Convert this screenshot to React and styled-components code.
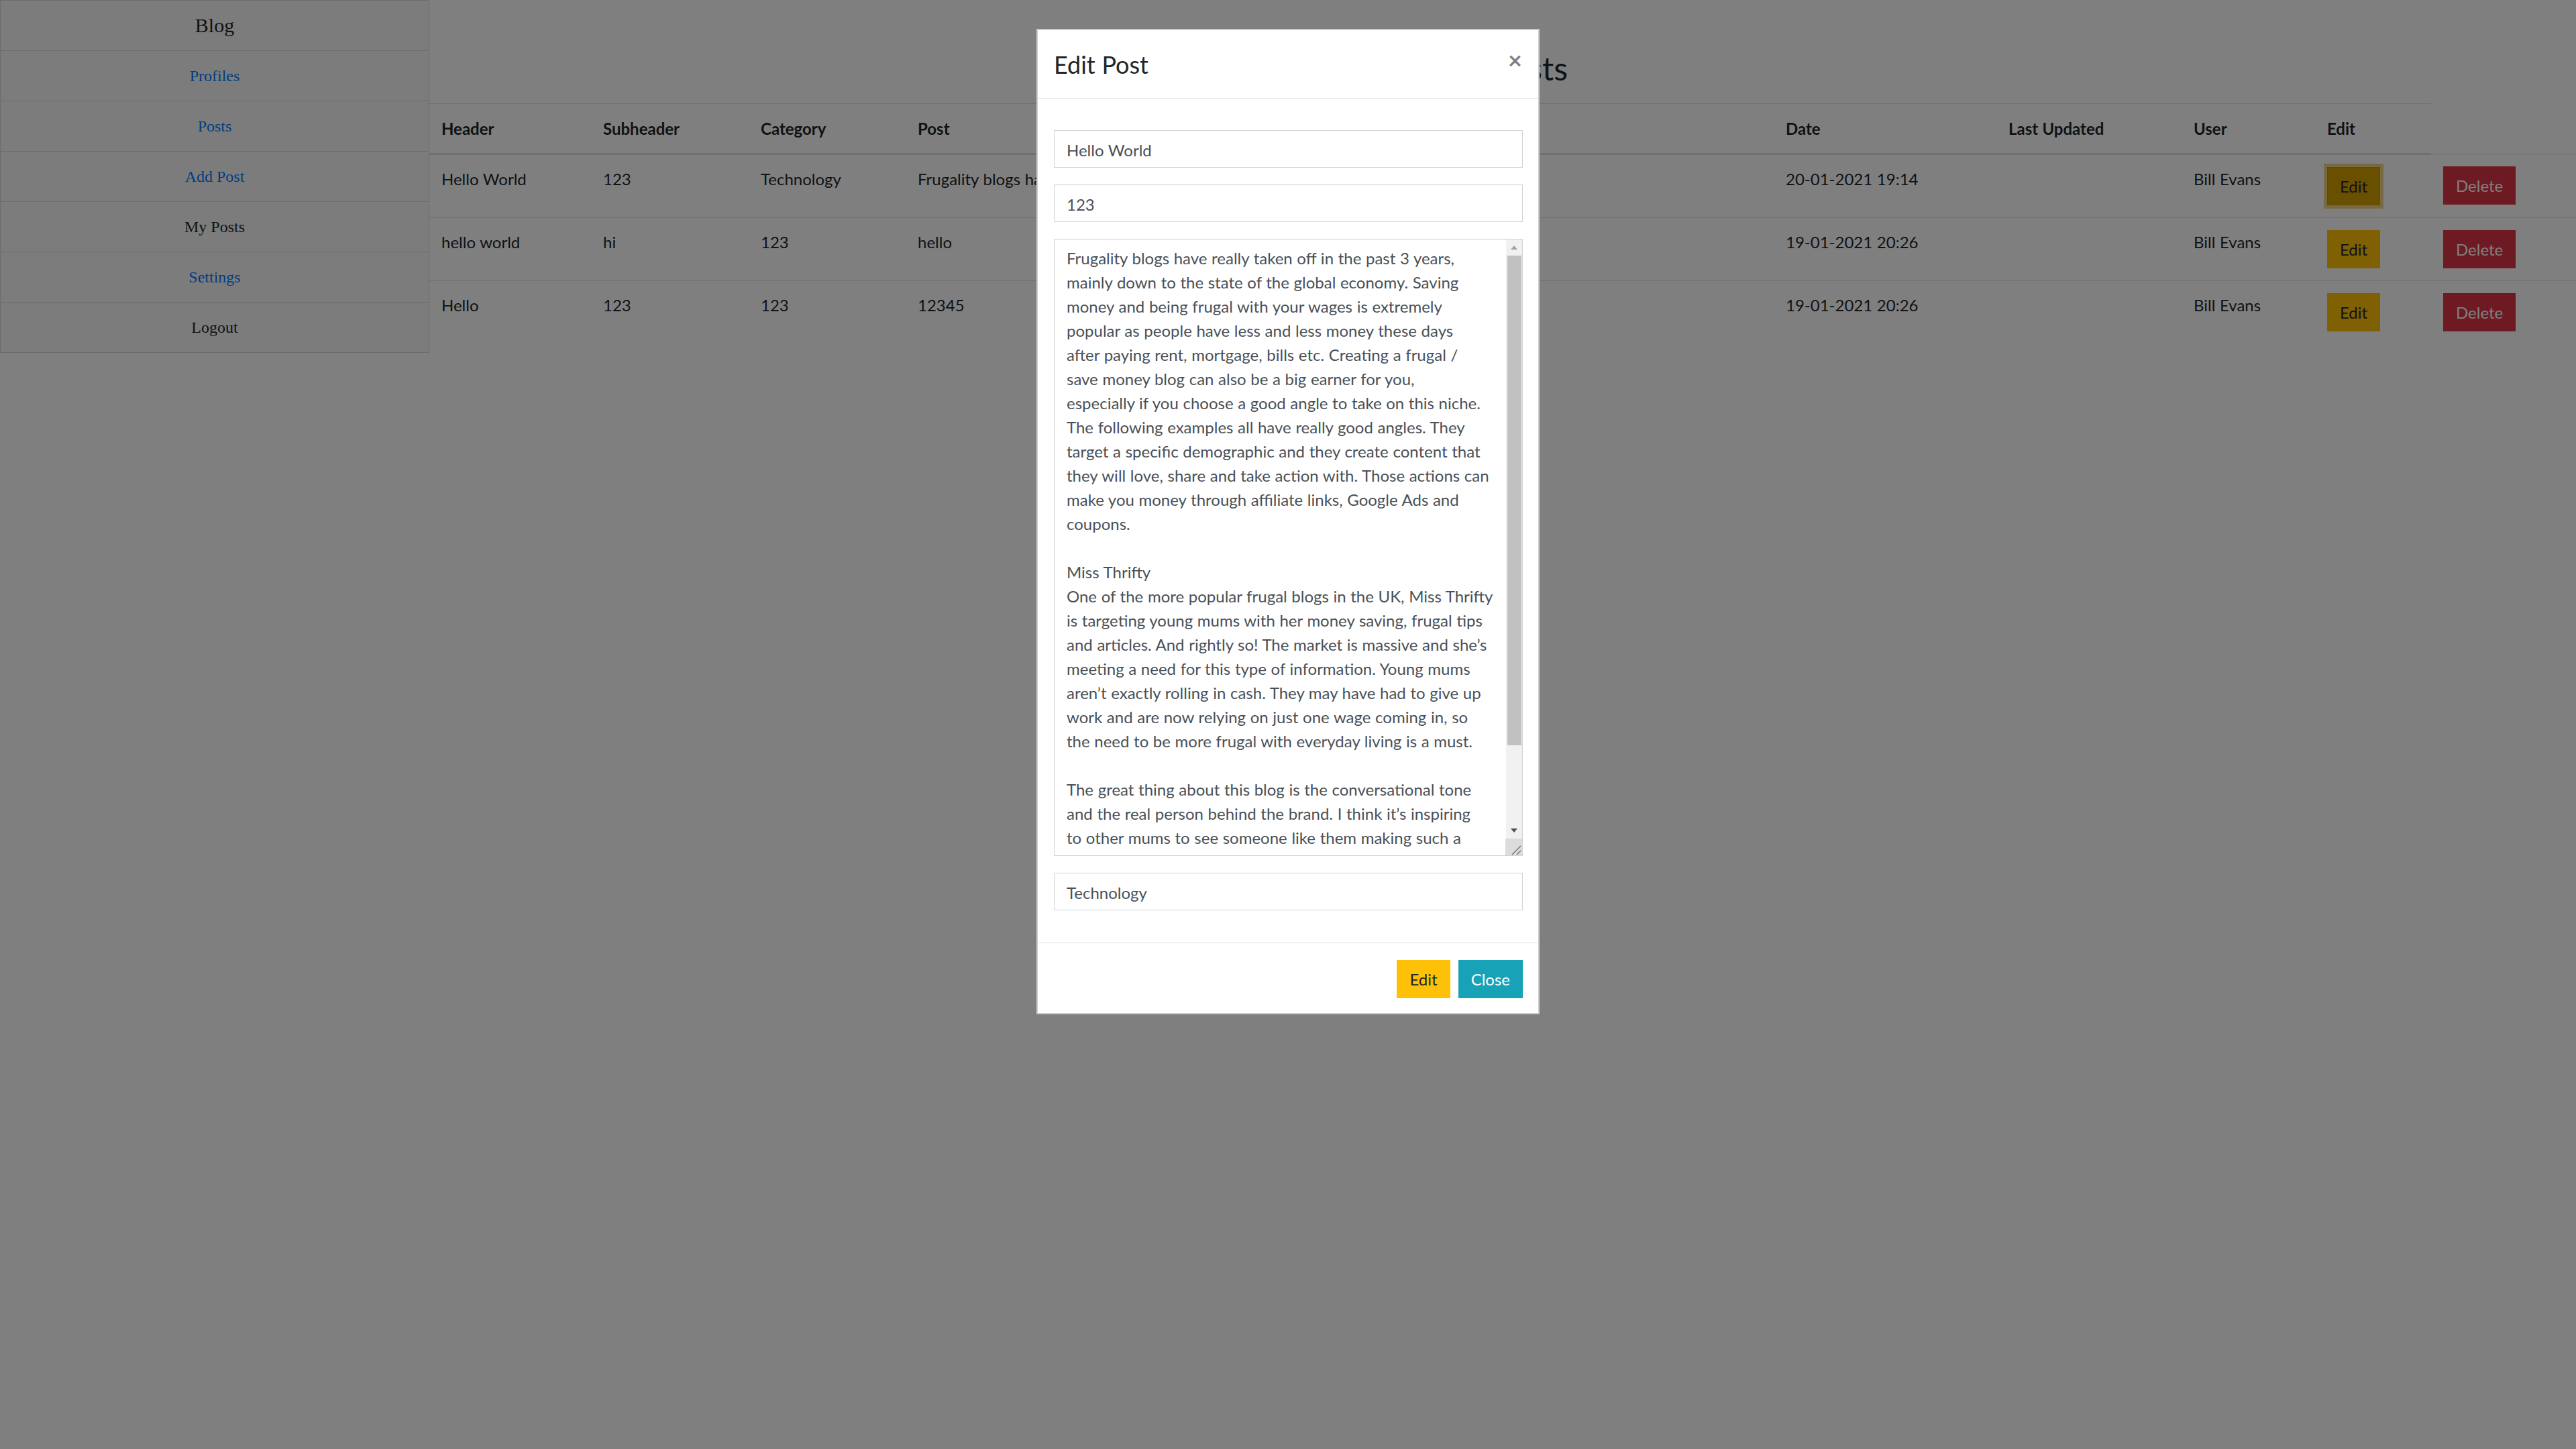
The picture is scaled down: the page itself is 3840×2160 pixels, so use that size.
import React from 'react';
import styled, { createGlobalStyle, css } from 'styled-components';

const FONT = `Lato, "Open Sans", "Noto Sans", sans-serif`;
const SERIF = `"Liberation Serif", "Times New Roman", serif`;

const GlobalStyle = createGlobalStyle`
  *, *::before, *::after { box-sizing: border-box; }
  html, body { margin: 0; padding: 0; background: #fff; }
  body {
    font-family: ${FONT};
    font-size: 24px;
    line-height: 36px;
    color: #212529;
    word-spacing: 0.02em;
  }
`;

const Page = styled.div`
  display: flex;
  align-items: flex-start;
  width: 100%;
  height: 100vh;
  overflow: hidden;
`;

const Sidebar = styled.nav`
  flex: 0 0 640px;
  display: flex;
  flex-direction: column;
`;

const NavItem = styled.a`
  display: block;
  height: 76px;
  line-height: 74px;
  margin-top: -1px;
  &:first-child { margin-top: 0; }
  border: 1px solid rgba(0, 0, 0, 0.125);
  background: #f8f9fa;
  text-align: center;
  font-family: ${SERIF};
  word-spacing: 0;
  font-size: ${({ $brand }) => ($brand ? '30px' : '24px')};
  color: ${({ $link }) => ($link ? '#007bff' : '#212529')};
  text-decoration: none;
`;

const Main = styled.main`
  flex: 1 1 auto;
  min-width: 0;
`;

const Title = styled.h2`
  margin: 0;
  padding: 73px 0 24px;
  font-size: 48px;
  line-height: 57px;
  font-weight: 400;
  text-align: center;
`;

const Table = styled.table`
  width: 100%;
  border-collapse: collapse;
  table-layout: fixed;
`;

const Th = styled.th`
  padding: 19px 18px 18px;
  text-align: left;
  vertical-align: bottom;
  font-weight: 700;
  border-top: 1px solid #dee2e6;
  border-bottom: 3px solid #dee2e6;
  white-space: nowrap;
`;

const Td = styled.td`
  padding: 18px;
  vertical-align: top;
  border-top: 1px solid #dee2e6;
  white-space: nowrap;
  overflow: hidden;
`;

const variants = {
  warning: css`
    background: #ffc107;
    border-color: #ffc107;
    color: #212529;
  `,
  warningActive: css`
    background: #d39e00;
    border-color: #c69500;
    color: #212529;
    box-shadow: 0 0 0 5px rgba(222, 170, 12, 0.5);
  `,
  danger: css`
    background: #dc3545;
    border-color: #dc3545;
    color: #fff;
  `,
  info: css`
    background: #17a2b8;
    border-color: #17a2b8;
    color: #fff;
  `,
};

const Btn = styled.button`
  font-family: ${FONT};
  font-size: 24px;
  line-height: 36px;
  word-spacing: 0.02em;
  padding: 10px 18px 9px;
  border: 1px solid transparent;
  border-radius: 0;
  cursor: pointer;
  ${({ $variant }) => variants[$variant]}
`;

const TableBtn = styled(Btn)`
  display: block;
`;

const Backdrop = styled.div`
  position: fixed;
  inset: 0;
  background: #000;
  opacity: 0.5;
`;

const ModalWrap = styled.div`
  position: fixed;
  inset: 0;
  overflow: hidden;
`;

const Dialog = styled.div`
  width: 750px;
  margin: 43px auto 0;
  background: #fff;
  border: 2px solid rgba(0, 0, 0, 0.2);
  display: flex;
  flex-direction: column;
`;

const ModalHeader = styled.div`
  display: flex;
  align-items: flex-start;
  justify-content: space-between;
  padding: 24px 24px 23px;
  border-bottom: 1px solid #dee2e6;
`;

const ModalTitle = styled.div`
  font-size: 36px;
  line-height: 54px;
  font-weight: 400;
  color: #212529;
`;

const CloseX = styled.button`
  background: none;
  border: 0;
  padding: 24px;
  margin: -22px -24px -24px auto;
  font-family: ${FONT};
  font-size: 36px;
  font-weight: 700;
  line-height: 1;
  color: #000;
  opacity: 0.5;
  text-shadow: 0 1px 0 #fff;
  cursor: pointer;
`;

const ModalBody = styled.form`
  display: flex;
  flex-direction: column;
  gap: 25px;
  padding: 47px 23px 48px 24px;
`;

const fieldBase = css`
  display: block;
  width: 100%;
  border: 1px solid #ced4da;
  border-radius: 0;
  background: #fff;
  font-family: ${FONT};
  font-size: 24px;
  line-height: 36px;
  word-spacing: 0.02em;
  color: #495057;
  padding: 10px 18px 8px;
  margin: 0;
`;

const Input = styled.input`
  ${fieldBase}
  height: 56px;
  &:focus { outline: none; }
`;

const FieldWrap = styled.div`
  position: relative;
`;

const TextArea = styled.textarea`
  ${fieldBase}
  height: 920px;
  padding-right: 44px;
  resize: none;
  overflow-y: scroll;
  overflow-x: hidden;
  white-space: pre;
  scrollbar-width: none;
  &::-webkit-scrollbar { display: none; }
  &:focus { outline: none; }
`;

/* Classic scrollbar drawn over the textarea's right edge */
const ScrollBar = styled.div`
  position: absolute;
  top: 1px;
  right: 1px;
  bottom: 1px;
  width: 24px;
  display: flex;
  flex-direction: column;
  background: #f1f1f1;
  pointer-events: none;
`;

const ArrowBtn = styled.div`
  flex: 0 0 24px;
  display: flex;
  align-items: center;
  justify-content: center;
  &::before {
    content: '';
    width: 0;
    height: 0;
    border-left: 5.5px solid transparent;
    border-right: 5.5px solid transparent;
    ${({ $dir, $color }) =>
      $dir === 'up'
        ? `border-bottom: 6px solid ${$color};`
        : `border-top: 6px solid ${$color};`}
  }
`;

const Track = styled.div`
  flex: 1 1 auto;
  padding: 0 1px 0 2px;
`;

const Thumb = styled.div`
  height: ${({ $h }) => $h}px;
  background: #c1c1c1;
`;

const Resizer = styled.div`
  flex: 0 0 25px;
  margin-left: -1px;
  background: #dcdcdc;
  display: flex;
  align-items: flex-end;
  justify-content: flex-end;
`;

const ModalFooter = styled.div`
  display: flex;
  justify-content: flex-end;
  align-items: center;
  gap: 12px;
  padding: 25px 23px 22px 24px;
  border-top: 1px solid #dee2e6;
`;

const postText = [
  'Frugality blogs have really taken off in the past 3 years,',
  'mainly down to the state of the global economy. Saving',
  'money and being frugal with your wages is extremely',
  'popular as people have less and less money these days',
  'after paying rent, mortgage, bills etc. Creating a frugal /',
  'save money blog can also be a big earner for you,',
  'especially if you choose a good angle to take on this niche.',
  'The following examples all have really good angles. They',
  'target a specific demographic and they create content that',
  'they will love, share and take action with. Those actions can',
  'make you money through affiliate links, Google Ads and',
  'coupons.',
  '',
  'Miss Thrifty',
  'One of the more popular frugal blogs in the UK, Miss Thrifty',
  'is targeting young mums with her money saving, frugal tips',
  'and articles. And rightly so! The market is massive and she’s',
  'meeting a need for this type of information. Young mums',
  'aren’t exactly rolling in cash. They may have had to give up',
  'work and are now relying on just one wage coming in, so',
  'the need to be more frugal with everyday living is a must.',
  '',
  'The great thing about this blog is the conversational tone',
  'and the real person behind the brand. I think it’s inspiring',
  'to other mums to see someone like them making such a',
  'success of it and earning money from home while looking',
  'after their little ones.',
  '',
  'Money Saving Mom',
].join('\n');

const navItems = [
  { label: 'Blog', brand: true },
  { label: 'Profiles', link: true },
  { label: 'Posts', link: true },
  { label: 'Add Post', link: true },
  { label: 'My Posts' },
  { label: 'Settings', link: true },
  { label: 'Logout' },
];

const colWidths = [241, 235, 234, 1294, 332, 276, 199, 173, 216];
const headers = ['Header', 'Subheader', 'Category', 'Post', 'Date', 'Last Updated', 'User', 'Edit'];

const rows = [
  {
    header: 'Hello World',
    sub: '123',
    cat: 'Technology',
    post: 'Frugality blogs have really taken off in the past 3 years,',
    date: '20-01-2021 19:14',
    user: 'Bill Evans',
    active: true,
  },
  { header: 'hello world', sub: 'hi', cat: '123', post: 'hello', date: '19-01-2021 20:26', user: 'Bill Evans' },
  { header: 'Hello', sub: '123', cat: '123', post: '12345', date: '19-01-2021 20:26', user: 'Bill Evans' },
];

export default function App() {
  return (
    <>
      <GlobalStyle />
      <Page>
        <Sidebar>
          {navItems.map((n) => (
            <NavItem key={n.label} href="#" $brand={n.brand} $link={n.link}>
              {n.label}
            </NavItem>
          ))}
        </Sidebar>
        <Main>
          <Title>My Posts</Title>
          <Table>
            <colgroup>
              {colWidths.map((w, i) => (
                <col key={i} style={{ width: w }} />
              ))}
            </colgroup>
            <thead>
              <tr>
                {headers.map((h) => (
                  <Th key={h}>{h}</Th>
                ))}
              </tr>
            </thead>
            <tbody>
              {rows.map((r, i) => (
                <tr key={i}>
                  <Td>{r.header}</Td>
                  <Td>{r.sub}</Td>
                  <Td>{r.cat}</Td>
                  <Td>{r.post}</Td>
                  <Td>{r.date}</Td>
                  <Td></Td>
                  <Td>{r.user}</Td>
                  <Td>
                    <TableBtn type="button" $variant={r.active ? 'warningActive' : 'warning'}>Edit</TableBtn>
                  </Td>
                  <Td>
                    <TableBtn type="button" $variant="danger">Delete</TableBtn>
                  </Td>
                </tr>
              ))}
            </tbody>
          </Table>
        </Main>
      </Page>
      <Backdrop />
      <ModalWrap>
        <Dialog role="dialog">
          <ModalHeader>
            <ModalTitle>Edit Post</ModalTitle>
            <CloseX type="button" aria-label="Close">×</CloseX>
          </ModalHeader>
          <ModalBody onSubmit={(e) => e.preventDefault()}>
            <Input defaultValue="Hello World" />
            <Input defaultValue="123" />
            <FieldWrap>
              <TextArea wrap="off" defaultValue={postText} />
              <ScrollBar aria-hidden="true">
                <ArrowBtn $dir="up" $color="#a3a3a3" />
                <Track>
                  <Thumb $h={730} />
                </Track>
                <ArrowBtn $dir="down" $color="#505050" />
                <Resizer>
                  <svg width="25" height="25" viewBox="0 0 25 25">
                    <line x1="10" y1="24" x2="23" y2="11" stroke="#6a6a6a" strokeWidth="1.2" />
                    <line x1="17" y1="24" x2="23" y2="18" stroke="#6a6a6a" strokeWidth="1.2" />
                  </svg>
                </Resizer>
              </ScrollBar>
            </FieldWrap>
            <Input defaultValue="Technology" />
          </ModalBody>
          <ModalFooter>
            <Btn type="button" $variant="warning">Edit</Btn>
            <Btn type="button" $variant="info">Close</Btn>
          </ModalFooter>
        </Dialog>
      </ModalWrap>
    </>
  );
}
